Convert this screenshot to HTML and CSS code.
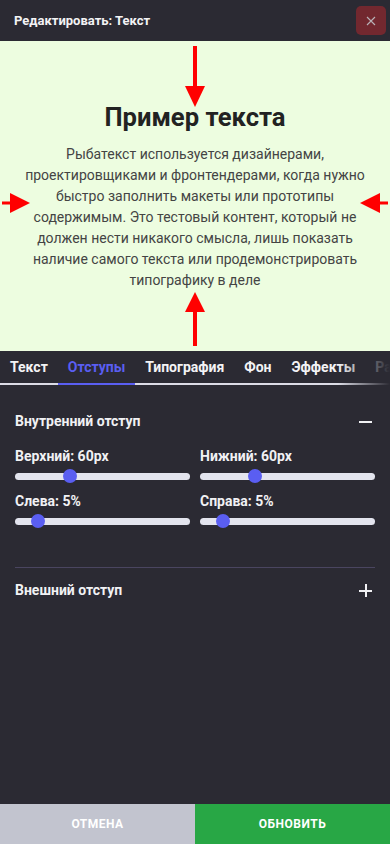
FILE: index.html
```html
<!DOCTYPE html>
<html lang="ru">
<head>
  <meta charset="UTF-8">
  <meta name="viewport" content="width=device-width, initial-scale=1">
  <title>Редактировать: Текст</title>
  <link rel="stylesheet" href="styles.css">
</head>
<body>

  <!-- ===== Header ===== -->
  <header class="topbar">
    <div class="topbar-title">Редактировать: Текст</div>
    <button class="close-btn" aria-label="Закрыть">
      <svg width="10" height="10" viewBox="0 0 10 10"><path d="M1 1L9 9M9 1L1 9" stroke="#b9b3b8" stroke-width="1.1"/></svg>
    </button>
  </header>

  <!-- ===== Preview ===== -->
  <section class="preview">
    <h2>Пример текста</h2>
    <p>Рыбатекст используется дизайнерами, проектировщиками и фронтендерами, когда нужно быстро заполнить макеты или прототипы содержимым. Это тестовый контент, который не должен нести никакого смысла, лишь показать наличие самого текста или продемонстрировать типографику в деле</p>

    <span class="arrow arrow-top">
      <svg width="20" height="61" viewBox="0 0 20 61"><rect x="8" y="0" width="4" height="41" fill="#f00"/><polygon points="0,40 20,40 10,61" fill="#f00"/></svg>
    </span>
    <span class="arrow arrow-bottom">
      <svg width="20" height="54" viewBox="0 0 20 54"><polygon points="10,0 0,20 20,20" fill="#f00"/><rect x="8" y="19" width="4" height="35" fill="#f00"/></svg>
    </span>
    <span class="arrow arrow-left">
      <svg width="28" height="20" viewBox="0 0 28 20"><rect x="0" y="8.5" width="10" height="3" fill="#f00"/><polygon points="8,0 28,10 8,20" fill="#f00"/></svg>
    </span>
    <span class="arrow arrow-right">
      <svg width="28" height="20" viewBox="0 0 28 20"><rect x="18" y="8.5" width="10" height="3" fill="#f00"/><polygon points="20,0 0,10 20,20" fill="#f00"/></svg>
    </span>
  </section>

  <!-- ===== Tabs ===== -->
  <nav class="tabs">
    <a class="tab" href="#">Текст</a>
    <a class="tab active" href="#">Отступы</a>
    <a class="tab" href="#">Типография</a>
    <a class="tab" href="#">Фон</a>
    <a class="tab" href="#">Эффекты</a>
    <a class="tab" href="#">Рамка</a>
    <div class="tabs-fade"></div>
  </nav>

  <!-- ===== Settings ===== -->
  <main class="panel">
    <div class="acc-item open">
      <div class="acc-head">
        <span>Внутренний отступ</span>
        <span class="acc-toggle minus"></span>
      </div>
      <div class="acc-body">
        <label class="field">
          <span>Верхний: 60px</span>
          <input type="range" min="0" max="200" value="60">
        </label>
        <label class="field">
          <span>Нижний: 60px</span>
          <input type="range" min="0" max="200" value="60">
        </label>
        <label class="field">
          <span>Слева: 5%</span>
          <input type="range" min="0" max="50" value="5">
        </label>
        <label class="field">
          <span>Справа: 5%</span>
          <input type="range" min="0" max="50" value="5">
        </label>
      </div>
    </div>

    <div class="acc-item">
      <div class="acc-head">
        <span>Внешний отступ</span>
        <span class="acc-toggle plus"></span>
      </div>
    </div>
  </main>

  <!-- ===== Footer buttons ===== -->
  <footer class="actions">
    <button class="btn btn-cancel">Отмена</button>
    <button class="btn btn-save">Обновить</button>
  </footer>

</body>
</html>
```

FILE: styles.css
```css
/* ===== Base ===== */
body {
  margin: 0;
  height: 844px;
  display: flex;
  flex-direction: column;
  font-family: Roboto, 'Liberation Sans', sans-serif;
  background: #2b2a33;
  color: #f1f1f4;
}

/* ===== Header ===== */
.topbar {
  height: 41px;
  display: flex;
  align-items: center;
  justify-content: space-between;
  padding: 0 4px 0 14px;
}
.topbar-title {
  font-size: 13px;
  font-weight: 700;
  color: #f3f3f5;
}
.close-btn {
  width: 30px;
  height: 29px;
  border: none;
  border-radius: 5px;
  background: #72282f;
  display: flex;
  align-items: center;
  justify-content: center;
  padding: 0;
}

/* ===== Preview ===== */
.preview {
  position: relative;
  background: #edfde0;
  padding: 60px 5%;
  text-align: center;
}
.preview h2 {
  margin: 0 0 11px;
  font-size: 25.6px;
  line-height: 32px;
  font-weight: 700;
  color: #222;
}
.preview p {
  margin: 0;
  font-size: 14px;
  line-height: 21px;
  color: #444;
}
.arrow {
  position: absolute;
  line-height: 0;
}
.arrow-top { top: 5px; left: 185px; }
.arrow-bottom { top: 251px; left: 185px; }
.arrow-left { top: 152px; left: 2px; }
.arrow-right { top: 152px; right: 2px; }

/* ===== Tabs ===== */
.tabs {
  position: relative;
  display: flex;
  white-space: nowrap;
  overflow: hidden;
}
.tab {
  padding: 8px 10px;
  font-size: 14px;
  line-height: 16px;
  font-weight: 700;
  color: #f3f3f5;
  text-decoration: none;
  border-bottom: 2px solid #dcdce6;
}
.tab.active {
  color: #5a5ef2;
  border-bottom-color: #5a5ef2;
}
.tabs-fade {
  position: absolute;
  top: 0;
  right: 0;
  bottom: 0;
  width: 52px;
  background: linear-gradient(to right, rgba(43,42,51,0), #2b2a33);
}

/* ===== Accordion ===== */
.panel {
  flex: 1;
  padding: 14px 15px 0;
}
.acc-item.open {
  border-bottom: 1px solid #4a4560;
}
.acc-head {
  display: flex;
  justify-content: space-between;
  align-items: center;
  padding: 12px 0;
  font-size: 14px;
  line-height: 20px;
  font-weight: 700;
  color: #f1f1f4;
}
.acc-toggle {
  position: relative;
  width: 13px;
  height: 13px;
  margin-right: 3px;
}
.acc-toggle::before,
.acc-toggle::after {
  content: '';
  position: absolute;
  background: #f1f1f4;
}
.acc-toggle::before {
  left: 0;
  right: 0;
  top: 6px;
  height: 2px;
}
.acc-toggle.plus::after {
  top: 0;
  bottom: 0;
  left: 5.5px;
  width: 2px;
}
.acc-body {
  display: grid;
  grid-template-columns: 1fr 1fr;
  gap: 10px;
  padding: 5px 0 39px;
}
.field {
  display: flex;
  flex-direction: column;
  gap: 4px;
  font-size: 14px;
  line-height: 17px;
  font-weight: 700;
  color: #f1f1f4;
}

/* ===== Range sliders ===== */
.field input[type=range] {
  -webkit-appearance: none;
  appearance: none;
  width: 100%;
  height: 14px;
  margin: 0;
  background: transparent;
}
.field input[type=range]::-webkit-slider-runnable-track {
  height: 7px;
  border-radius: 4px;
  background: #e3e4ee;
}
.field input[type=range]::-webkit-slider-thumb {
  -webkit-appearance: none;
  width: 14px;
  height: 14px;
  margin-top: -3.5px;
  border-radius: 50%;
  background: #5a5ef2;
  border: none;
}

/* ===== Footer buttons ===== */
.actions {
  display: flex;
  height: 40px;
}
.btn {
  flex: 1;
  border: none;
  font-family: inherit;
  font-size: 12px;
  letter-spacing: 0.5px;
  font-weight: 700;
  text-transform: uppercase;
  color: #fff;
}
.btn-cancel { background: #c2c4cf; }
.btn-save { background: #28a745; }
```
